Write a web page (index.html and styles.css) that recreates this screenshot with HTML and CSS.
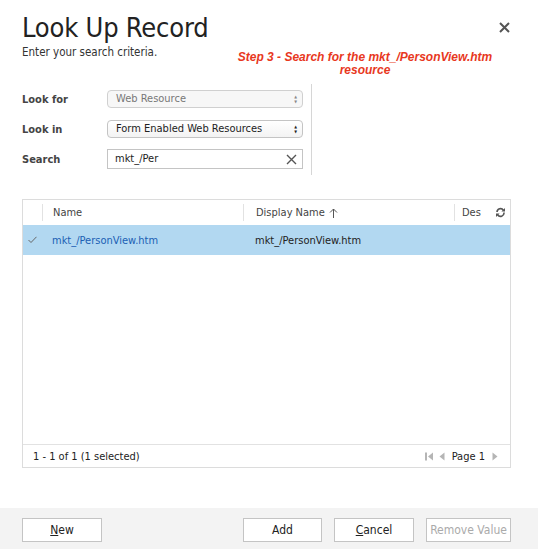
FILE: index.html
```html
<!DOCTYPE html>
<html lang="en">
<head>
    <meta charset="UTF-8">
    <title>Look Up Record</title>
    <link rel="stylesheet" href="styles.css">
</head>
<body>
    <div class="dialog">
        <div class="header">
            <h1>Look Up Record</h1>
            <button class="close" title="Close">
                <svg width="11" height="11" viewBox="0 0 11 11"><path d="M1 1L10 10M10 1L1 10" stroke="#555" stroke-width="2"/></svg>
            </button>
            <p class="subtitle">Enter your search criteria.</p>
            <div class="note">Step 3 - Search for the mkt_/PersonView.htm<br>resource</div>
        </div>

        <div class="criteria">
            <div class="form">
                <label>Look for</label>
                <div class="select disabled">Web Resource<span class="arrows">&#9650;<br>&#9660;</span></div>
                <label>Look in</label>
                <div class="select">Form Enabled Web Resources<span class="arrows">&#9650;<br>&#9660;</span></div>
                <label>Search</label>
                <div class="search">mkt_/Per
                    <svg width="11" height="11" viewBox="0 0 11 11"><path d="M1 1L10 10M10 1L1 10" stroke="#555" stroke-width="1.4"/></svg>
                </div>
            </div>
        </div>

        <div class="grid">
            <div class="grid-head">
                <div class="col col-check"></div>
                <div class="col col-name">Name</div>
                <div class="col col-display">Display Name
                    <svg width="9" height="10" viewBox="0 0 9 10"><path d="M4.5 10V1M1 4.5L4.5 1L8 4.5" stroke="#555" fill="none" stroke-width="1"/></svg>
                </div>
                <div class="col col-desc">Des</div>
                <div class="col col-refresh">
                    <svg width="11" height="11" viewBox="0 0 11 11">
                        <path d="M2 5A3.5 3.5 0 0 1 8.4 3.2" stroke="#555" stroke-width="1.6" fill="none"/>
                        <path d="M9 5.5A3.5 3.5 0 0 1 2.6 7.8" stroke="#555" stroke-width="1.6" fill="none"/>
                        <path d="M10 1V4.6H6.4Z" fill="#555"/>
                        <path d="M1 10V6.4H4.6Z" fill="#555"/>
                    </svg>
                </div>
            </div>
            <div class="grid-body">
                <div class="row selected">
                    <div class="col col-check">
                        <svg width="9" height="8" viewBox="0 0 9 8"><path d="M0.5 4L3 6.5L8.5 0.8" stroke="#666" fill="none" stroke-width="1"/></svg>
                    </div>
                    <div class="col col-name"><a href="#">mkt_/PersonView.htm</a></div>
                    <div class="col col-display">mkt_/PersonView.htm</div>
                </div>
            </div>
            <div class="grid-foot">
                <span>1 - 1 of 1 (1 selected)</span>
                <span class="pager">
                    <svg width="9" height="9" viewBox="0 0 9 9"><rect x="0" y="0.5" width="2" height="8" fill="#b5b5b5"/><path d="M8 0.5V8.5L3 4.5Z" fill="#b5b5b5"/></svg>
                    <svg width="6" height="9" viewBox="0 0 6 9"><path d="M5.5 0.5V8.5L0.5 4.5Z" fill="#b5b5b5"/></svg>
                    <span class="page">Page 1</span>
                    <svg width="6" height="9" viewBox="0 0 6 9"><path d="M0.5 0.5V8.5L5.5 4.5Z" fill="#b5b5b5"/></svg>
                </span>
            </div>
        </div>

        <div class="actions">
            <button class="btn btn-new"><u>N</u>ew</button>
            <span class="spacer"></span>
            <button class="btn btn-add">Add</button>
            <button class="btn btn-cancel"><u>C</u>ancel</button>
            <button class="btn btn-remove" disabled>Remove Value</button>
        </div>
    </div>
</body>
</html>
```

FILE: styles.css
```css
body {
    margin: 0;
    background: #fff;
    font-family: "DejaVu Sans Condensed", "DejaVu Sans", sans-serif;
    font-size: 11px;
    color: #222;
}
.dialog {
    width: 538px;
    height: 549px;
    display: flex;
    flex-direction: column;
    overflow: hidden;
}
.header {
    position: relative;
    padding: 11px 22px 0 22px;
    height: 73px;
    box-sizing: border-box;
}
h1 {
    margin: 0;
    font-size: 27px;
    font-weight: normal;
    color: #222;
    line-height: 34px;
    letter-spacing: -0.2px;
}
.subtitle {
    margin: 0;
    font-size: 11.5px;
    color: #333;
}
.close {
    position: absolute;
    top: 22px;
    right: 28px;
    border: none;
    background: none;
    padding: 0;
    width: 11px;
    height: 11px;
    display: flex;
}
.note {
    position: absolute;
    left: 228px;
    top: 51px;
    width: 274px;
    text-align: center;
    font-family: "Liberation Sans", Arial, sans-serif;
    font-weight: bold;
    font-style: italic;
    font-size: 12px;
    line-height: 13px;
    color: #e8381e;
}
.criteria {
    display: flex;
    padding: 11px 0 0 22px;
}
.form {
    display: grid;
    grid-template-columns: 85px 196px;
    grid-auto-rows: 30px;
    align-items: center;
    width: 289px;
    border-right: 1px solid #d6d6d6;
    height: 91px;
}
.form label {
    font-weight: bold;
    color: #444;
    font-size: 11px;
}
.select {
    position: relative;
    height: 16px;
    border: 1px solid #c4c4c4;
    border-radius: 4px;
    padding-left: 8px;
    line-height: 16px;
    background: linear-gradient(#fff, #f3f3f3);
    color: #222;
}
.select.disabled {
    color: #777;
    background: #f7f7f7;
    border-color: #d0d0d0;
}
.arrows {
    position: absolute;
    right: 5px;
    top: 3px;
    font-size: 4px;
    line-height: 5px;
    color: #222;
}
.select.disabled .arrows {
    color: #888;
}
.search {
    height: 18px;
    border: 1px solid #c4c4c4;
    padding-left: 7px;
    line-height: 18px;
    display: flex;
    justify-content: space-between;
    align-items: center;
    padding-right: 5px;
}
.grid {
    margin: 24px 27px 0 22px;
    border: 1px solid #dcdcdc;
    height: 269px;
    box-sizing: border-box;
    display: flex;
    flex-direction: column;
}
.grid-head, .row {
    display: flex;
    align-items: center;
}
.grid-head {
    height: 25px;
    color: #444;
}
.grid-head .col {
    height: 17px;
    line-height: 17px;
}
.col-check {
    width: 19px;
    display: flex;
    justify-content: center;
}
.col-name {
    width: 190px;
    padding-left: 10px;
}
.col-display {
    width: 198px;
    padding-left: 12px;
    display: flex;
    align-items: center;
    gap: 4px;
}
.row .col-display {
    padding-left: 13px;
}
.col-desc {
    width: 33px;
    padding-left: 7px;
    overflow: hidden;
}
.col-refresh {
    display: flex;
    align-items: center;
}
.grid-head .col-name, .grid-head .col-display, .grid-head .col-desc {
    border-left: 1px solid #e2e2e2;
}
.grid-body {
    flex: 1;
}
.row {
    height: 30px;
}
.row.selected {
    background: #b2d8f1;
}
.row a {
    color: #1b5fb4;
    text-decoration: none;
}
.grid-foot {
    height: 22px;
    border-top: 1px solid #e2e2e2;
    display: flex;
    align-items: center;
    justify-content: space-between;
    padding: 0 12px 0 10px;
}
.pager {
    display: flex;
    align-items: center;
    gap: 5px;
}
.page {
    margin: 0 2px;
}
.actions {
    margin-top: auto;
    height: 41px;
    box-sizing: border-box;
    background: #f3f3f3;
    display: flex;
    align-items: flex-start;
    padding: 10px 27px 0 22px;
    gap: 12px;
}
.spacer {
    flex: 1;
}
.btn {
    height: 24px;
    width: 80px;
    border: 1px solid #c4c4c4;
    background: #fff;
    font-family: inherit;
    font-size: 12px;
    color: #222;
    padding: 0;
}
.btn-add {
    width: 79px;
}
.btn-remove {
    width: 85px;
    color: #aaa;
}
```
